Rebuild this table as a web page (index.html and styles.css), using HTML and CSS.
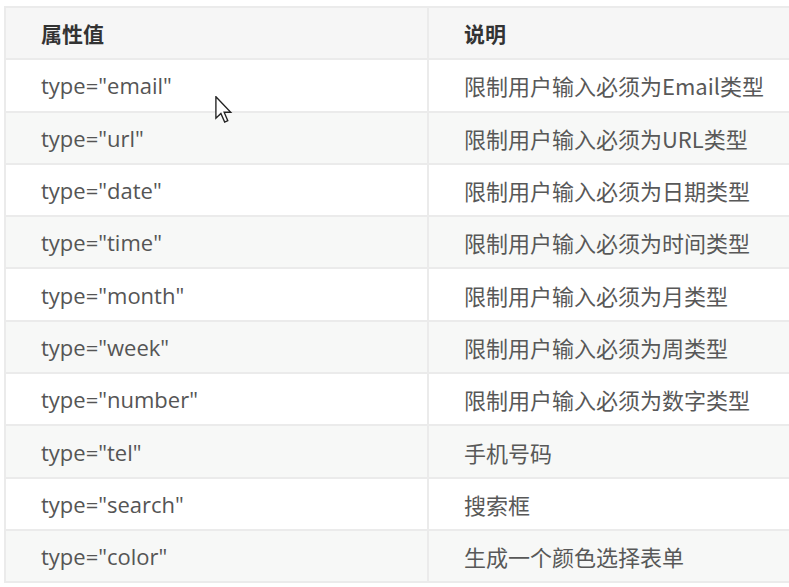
FILE: index.html
```html
<!DOCTYPE html>
<html lang="zh-CN">
<head>
<meta charset="utf-8">
<title>input type</title>
<link rel="stylesheet" href="styles.css">
</head>
<body>
<div class="page">
  <table class="attr-table">
    <thead>
      <tr><th class="col-a">属性值</th><th class="col-b">说明</th></tr>
    </thead>
    <tbody>
      <tr><td>type="email"</td><td>限制用户输入必须为Email类型</td></tr>
      <tr><td>type="url"</td><td>限制用户输入必须为URL类型</td></tr>
      <tr><td>type="date"</td><td>限制用户输入必须为日期类型</td></tr>
      <tr><td>type="time"</td><td>限制用户输入必须为时间类型</td></tr>
      <tr><td>type="month"</td><td>限制用户输入必须为月类型</td></tr>
      <tr><td>type="week"</td><td>限制用户输入必须为周类型</td></tr>
      <tr><td>type="number"</td><td>限制用户输入必须为数字类型</td></tr>
      <tr><td>type="tel"</td><td>手机号码</td></tr>
      <tr><td>type="search"</td><td>搜索框</td></tr>
      <tr><td>type="color"</td><td>生成一个颜色选择表单</td></tr>
    </tbody>
  </table>
  <svg class="cursor" width="18" height="27" viewBox="0 0 13 20">
    <polygon points="0.5,0.5 0.5,16.5 4.2,12.9 7,19.3 9.3,18.3 6.6,12 11.5,12" fill="#fff" stroke="#222" stroke-width="1" stroke-linejoin="miter"/>
  </svg>
</div>
</body>
</html>
```
FILE: styles.css
```css
html, body {
  margin: 0;
  padding: 0;
  background: #fff;
  overflow: hidden;
}

.page {
  position: relative;
  padding: 6px 0 0 4px;
  width: 800px;
}

.attr-table {
  border-collapse: collapse;
  width: 820px;
  font-family: "Open Sans", "Noto Sans CJK SC", sans-serif;
  font-size: 22px;
  color: #555;
  table-layout: fixed;
}

.attr-table .col-a {
  width: 423px;
}

.attr-table th,
.attr-table td {
  border: 2px solid #ebebeb;
  text-align: left;
  padding: 0 0 0 35px;
  height: 52.3px;
  box-sizing: border-box;
  white-space: nowrap;
  line-height: 1;
  vertical-align: middle;
}

.attr-table th {
  font-weight: bold;
  color: #333;
  background: #f6f6f6;
  font-family: "Noto Sans CJK SC", sans-serif;
  font-size: 21px;
}

.attr-table tbody tr:nth-child(odd) {
  background: #fff;
}

.attr-table tbody tr:nth-child(even) {
  background: #f7f8f7;
}

.attr-table td:last-child {
  font-family: "Noto Sans CJK SC", "Open Sans", sans-serif;
  font-size: 22px;
  color: #585858;
}

.cursor {
  position: absolute;
  left: 215px;
  top: 96px;
}
```
